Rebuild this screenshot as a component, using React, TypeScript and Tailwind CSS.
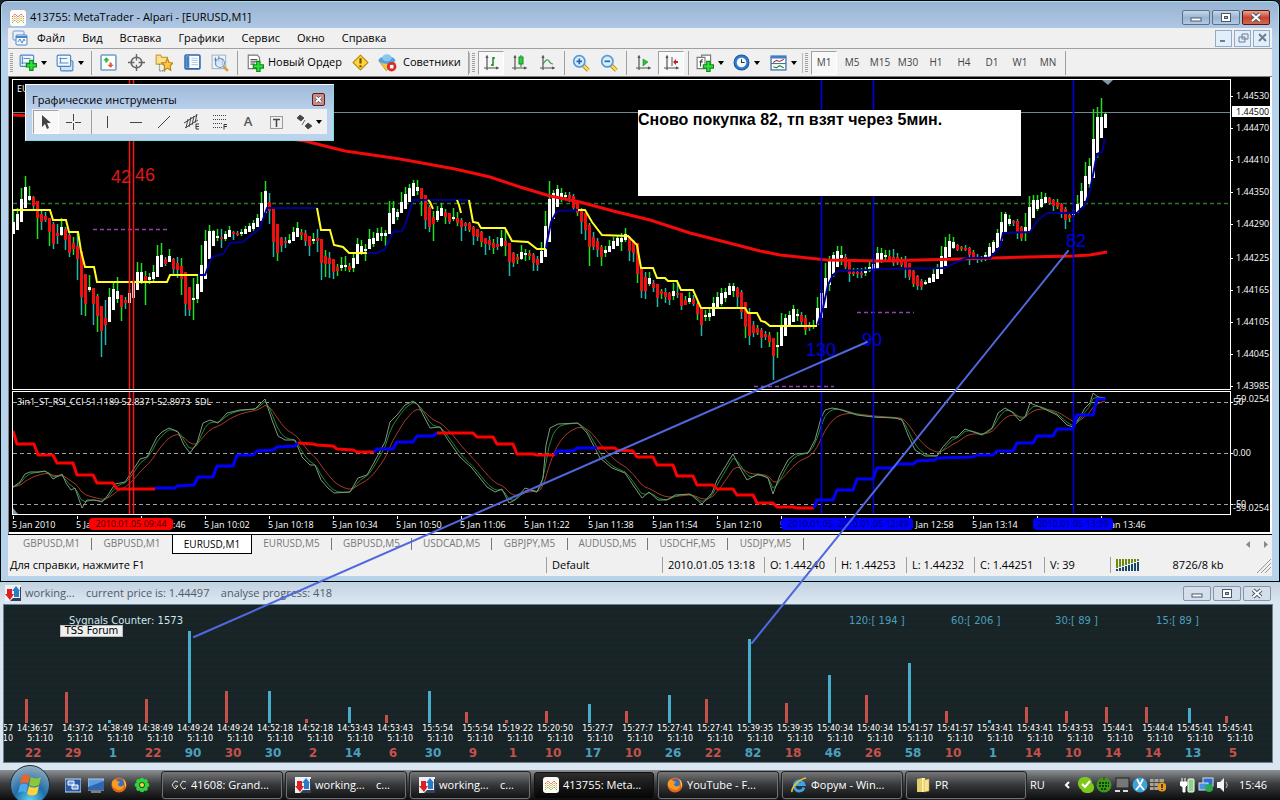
import React from "react";

type Point = [number, number];
// up, high, top, bottom, low
type Candle = [number, number, number, number, number];

const CANDLES: Candle[] = [
    [1, 210, 222, 234, 234], [1, 208, 214, 230, 230], [1, 188, 199, 222, 222], [1, 176, 187, 208, 208], [1, 186, 196, 200, 201],
    [0, 196, 197, 206, 210], [0, 201, 201, 218, 239], [0, 210, 214, 222, 230], [0, 212, 216, 220, 222], [0, 218, 218, 232, 246],
    [0, 222, 224, 244, 249], [0, 224, 233, 236, 244], [1, 218, 227, 235, 236], [0, 227, 229, 240, 250], [0, 232, 235, 253, 257],
    [0, 237, 243, 249, 255], [0, 233, 246, 259, 280], [0, 251, 251, 297, 315], [0, 274, 274, 304, 316], [1, 275, 287, 290, 292],
    [0, 288, 288, 304, 325], [0, 294, 296, 316, 332], [0, 306, 306, 331, 357], [0, 300, 318, 325, 345], [1, 288, 297, 322, 322],
    [1, 282, 289, 310, 310], [1, 277, 291, 299, 303], [0, 295, 295, 307, 321], [0, 297, 300, 303, 309], [1, 290, 293, 303, 303],
    [1, 280, 282, 298, 298], [1, 262, 272, 290, 290], [1, 263, 272, 281, 284], [0, 271, 276, 281, 305], [1, 273, 277, 280, 284],
    [1, 265, 272, 279, 281], [1, 245, 256, 277, 277], [1, 243, 255, 267, 267], [0, 257, 259, 264, 266], [1, 249, 256, 262, 262],
    [0, 258, 259, 269, 275], [0, 257, 263, 270, 278], [0, 258, 266, 279, 295], [0, 272, 272, 304, 316], [0, 287, 287, 310, 316],
    [1, 278, 298, 300, 320], [1, 276, 284, 299, 303], [1, 245, 265, 292, 292], [1, 230, 241, 279, 279], [1, 225, 231, 259, 259],
    [1, 230, 231, 246, 246], [1, 229, 236, 238, 241], [0, 229, 237, 239, 248], [1, 231, 234, 239, 241], [1, 226, 230, 237, 237],
    [0, 231, 232, 234, 240], [0, 231, 233, 235, 236], [1, 229, 232, 234, 236], [1, 226, 229, 234, 234], [1, 223, 226, 232, 232],
    [1, 220, 223, 229, 231], [1, 214, 218, 227, 227], [1, 192, 203, 221, 221], [1, 181, 191, 213, 213], [0, 193, 202, 211, 224],
    [0, 209, 209, 242, 257], [0, 224, 224, 253, 261], [0, 237, 238, 246, 252], [0, 237, 241, 243, 248], [1, 234, 240, 243, 244],
    [1, 227, 232, 241, 241], [1, 222, 228, 237, 237], [0, 229, 232, 235, 240], [0, 230, 233, 241, 246], [0, 236, 236, 246, 256],
    [1, 233, 239, 241, 244], [0, 229, 238, 241, 252], [0, 239, 239, 263, 280], [0, 250, 256, 264, 277], [0, 252, 258, 264, 278],
    [0, 259, 259, 272, 279], [0, 264, 267, 271, 276], [1, 257, 265, 268, 271], [1, 256, 265, 267, 271], [0, 263, 266, 270, 272],
    [1, 252, 258, 268, 272], [1, 238, 244, 264, 264], [1, 240, 246, 253, 255], [1, 244, 249, 251, 261], [1, 229, 239, 249, 249],
    [1, 232, 238, 244, 247], [1, 228, 233, 241, 241], [1, 227, 233, 236, 241], [1, 230, 233, 236, 246], [1, 201, 213, 234, 234],
    [1, 201, 208, 224, 224], [1, 209, 212, 217, 220], [1, 192, 202, 213, 213], [1, 187, 194, 209, 209], [1, 184, 188, 202, 202],
    [1, 180, 183, 196, 196], [1, 180, 187, 191, 195], [0, 188, 188, 201, 216], [0, 195, 195, 220, 229], [0, 205, 207, 227, 232],
    [0, 211, 217, 224, 241], [1, 206, 211, 220, 222], [1, 203, 208, 216, 216], [0, 209, 212, 217, 224], [0, 213, 213, 222, 224],
    [1, 208, 217, 219, 221], [0, 212, 218, 223, 226], [0, 218, 220, 227, 241], [0, 222, 223, 226, 231], [0, 222, 223, 230, 232],
    [0, 226, 227, 236, 245], [0, 229, 229, 237, 241], [0, 231, 232, 242, 247], [0, 238, 238, 244, 255], [0, 236, 240, 245, 250],
    [0, 239, 243, 248, 254], [0, 237, 244, 247, 250], [1, 230, 238, 246, 247], [0, 230, 241, 246, 256], [0, 243, 243, 262, 276],
    [0, 252, 253, 263, 267], [0, 254, 257, 260, 264], [1, 245, 252, 259, 260], [1, 249, 253, 255, 261], [0, 250, 253, 256, 260],
    [0, 253, 255, 263, 271], [0, 256, 259, 265, 271], [1, 242, 251, 263, 263], [1, 211, 226, 257, 257], [1, 181, 199, 242, 242],
    [1, 190, 193, 219, 219], [1, 185, 189, 207, 207], [1, 188, 193, 198, 202], [1, 192, 195, 197, 199], [0, 192, 195, 198, 202],
    [0, 194, 196, 208, 211], [0, 202, 202, 213, 216], [0, 208, 211, 222, 234], [0, 213, 213, 230, 240], [0, 223, 225, 247, 266],
    [0, 232, 237, 247, 250], [0, 238, 241, 250, 257], [0, 245, 247, 257, 266], [1, 246, 250, 253, 257], [1, 240, 246, 252, 252],
    [1, 237, 241, 249, 249], [1, 235, 238, 246, 246], [1, 233, 238, 242, 251], [1, 228, 234, 240, 242], [0, 236, 238, 251, 261],
    [0, 240, 242, 253, 262], [0, 243, 243, 274, 283], [0, 267, 267, 291, 298], [0, 272, 277, 291, 299], [1, 272, 278, 284, 286],
    [0, 280, 283, 288, 292], [0, 284, 284, 298, 307], [0, 289, 291, 294, 299], [0, 288, 292, 297, 303], [0, 292, 293, 300, 305],
    [1, 283, 291, 296, 300], [0, 283, 293, 295, 298], [0, 293, 293, 306, 310], [0, 296, 300, 305, 305], [1, 292, 298, 302, 304],
    [0, 295, 299, 304, 306], [0, 302, 304, 314, 320], [0, 309, 309, 325, 336], [1, 310, 315, 317, 321], [1, 309, 313, 317, 321],
    [1, 297, 303, 316, 316], [1, 292, 297, 309, 309], [1, 288, 293, 304, 306], [1, 288, 292, 298, 302], [1, 283, 286, 295, 295],
    [1, 283, 286, 291, 297], [0, 287, 288, 297, 309], [0, 290, 292, 312, 319], [0, 302, 302, 327, 338], [0, 308, 313, 336, 345],
    [0, 321, 325, 333, 337], [0, 325, 328, 333, 335], [0, 328, 330, 338, 348], [0, 331, 334, 337, 340], [0, 332, 335, 342, 347],
    [0, 338, 338, 356, 380], [1, 332, 345, 347, 358], [1, 313, 325, 346, 346], [1, 314, 318, 336, 336], [1, 311, 315, 327, 327],
    [1, 305, 309, 322, 322], [1, 309, 314, 316, 321], [0, 312, 315, 322, 325], [0, 315, 318, 330, 335], [0, 322, 325, 328, 331],
    [1, 320, 325, 327, 329], [1, 297, 308, 325, 325], [1, 290, 293, 318, 318], [1, 263, 278, 308, 308], [1, 256, 261, 285, 291],
    [1, 252, 255, 274, 277], [1, 246, 251, 267, 267], [1, 246, 255, 258, 265], [0, 254, 257, 267, 269], [0, 262, 262, 274, 282],
    [0, 268, 272, 274, 276], [0, 268, 272, 274, 278], [0, 268, 273, 275, 278], [1, 267, 271, 273, 276], [1, 262, 267, 271, 272],
    [1, 258, 264, 270, 271], [1, 247, 253, 270, 270], [1, 248, 253, 260, 263], [1, 250, 255, 257, 262], [0, 250, 256, 260, 262],
    [0, 249, 257, 263, 266], [0, 253, 257, 263, 265], [0, 257, 259, 265, 267], [0, 256, 260, 269, 278], [0, 263, 263, 277, 280],
    [0, 270, 271, 284, 287], [0, 275, 276, 286, 290], [0, 279, 281, 287, 290], [1, 280, 282, 284, 285], [1, 277, 278, 283, 283],
    [1, 268, 274, 282, 282], [1, 264, 269, 279, 279], [1, 246, 256, 274, 274], [1, 237, 247, 266, 266], [1, 234, 241, 257, 257],
    [1, 237, 242, 248, 249], [0, 244, 245, 250, 251], [0, 246, 247, 249, 251], [0, 245, 248, 250, 251], [0, 247, 248, 255, 265],
    [0, 250, 252, 257, 260], [0, 254, 257, 259, 263], [0, 256, 257, 259, 262], [1, 252, 255, 258, 261], [1, 243, 247, 258, 258],
    [1, 240, 242, 253, 253], [1, 229, 233, 248, 248], [1, 212, 222, 241, 241], [1, 212, 214, 232, 232], [1, 215, 219, 224, 226],
    [0, 220, 221, 223, 226], [0, 219, 221, 233, 239], [0, 226, 227, 238, 241], [1, 213, 227, 232, 241], [1, 196, 207, 231, 231],
    [1, 195, 200, 218, 218], [1, 195, 200, 209, 211], [1, 192, 199, 207, 208], [1, 193, 197, 203, 203], [0, 197, 198, 203, 205],
    [0, 199, 200, 206, 211], [0, 199, 202, 207, 209], [0, 203, 204, 212, 218], [0, 207, 209, 220, 229], [0, 213, 215, 218, 222],
    [1, 210, 212, 215, 217], [1, 195, 204, 213, 213], [1, 183, 191, 208, 208], [1, 162, 176, 201, 201], [1, 158, 166, 184, 188],
    [1, 109, 139, 178, 178], [1, 107, 117, 153, 158], [1, 98, 117, 138, 138], [1, 112, 114, 128, 128],
];

const SLOW_MA: Point[] = [
    [13, 115], [60, 117], [120, 120], [200, 127], [305, 141], [345, 151], [400, 159], [455, 169], [490, 177], [520, 187], [550, 196],
    [580, 202], [613, 211], [650, 220], [690, 233], [733, 244], [760, 251], [780, 255], [827, 260], [880, 261], [960, 259],
    [1027, 257], [1073, 256], [1090, 255], [1107, 252],
];

const YELLOW: Point[][] = [
    [[13, 210], [50, 210], [53, 220], [66, 220], [69, 232], [78, 232], [81, 251], [85, 267], [94, 267], [97, 282], [167, 282], [170, 275], [198, 275]],
    [[317, 208], [321, 230], [330, 230], [334, 245], [343, 247], [349, 253], [367, 253]],
    [[428, 200], [430, 202], [433, 209]],
    [[457, 200], [459, 205], [461, 213]],
    [[469, 200], [473, 222], [478, 223], [481, 228], [505, 228], [512, 241], [528, 242], [537, 249], [546, 249]],
    [
        [578, 210], [585, 210], [592, 222], [602, 235], [628, 236], [637, 245], [641, 268], [653, 268], [657, 278], [665, 278],
        [668, 281], [677, 281], [681, 290], [693, 290], [701, 308], [745, 308], [748, 313], [757, 313], [761, 321], [765, 322],
        [770, 326], [817, 326],
    ],
];

const NAVY: Point[][] = [
    [[198, 275], [205, 275], [212, 257], [223, 254], [230, 243], [243, 242], [260, 228], [267, 208], [317, 208]],
    [[367, 253], [377, 253], [385, 249], [393, 232], [402, 231], [405, 225], [413, 200], [469, 200]],
    [[546, 249], [547, 242], [551, 222], [557, 211], [578, 210]],
    [
        [817, 326], [823, 308], [828, 285], [833, 275], [838, 271], [867, 270], [880, 269], [945, 268], [957, 262], [967, 258],
        [990, 258], [1000, 247], [1003, 233], [1030, 232], [1038, 220], [1047, 213], [1077, 213], [1085, 205], [1090, 190],
        [1093, 175], [1097, 154], [1102, 152], [1105, 139],
    ],
];

const FAST: Point[] = [
    [13, 487], [20, 482], [25, 474], [30, 472], [38, 472], [45, 471], [49, 474], [53, 479], [62, 474], [66, 483], [71, 490], [75, 488],
    [82, 508], [87, 500], [95, 500], [102, 502], [108, 495], [115, 484], [125, 482], [133, 470], [140, 459], [147, 457], [157, 437],
    [162, 432], [169, 428], [178, 432], [184, 445], [190, 453], [197, 443], [203, 423], [210, 420], [218, 423], [227, 413], [240, 410],
    [255, 409], [265, 399], [272, 420], [278, 436], [285, 440], [295, 440], [302, 457], [310, 465], [315, 465], [321, 480], [328, 488],
    [334, 493], [350, 492], [358, 478], [367, 475], [377, 457], [385, 442], [390, 422], [397, 415], [405, 405], [413, 401], [418, 405],
    [430, 428], [440, 427], [448, 440], [460, 457], [472, 468], [487, 487], [495, 492], [502, 489], [509, 503], [515, 500], [525, 488],
    [537, 492], [543, 478], [546, 445], [550, 428], [558, 424], [578, 423], [587, 433], [600, 458], [612, 468], [625, 473], [633, 485],
    [642, 498], [649, 492], [658, 500], [667, 500], [675, 495], [690, 494], [702, 504], [712, 493], [717, 480], [733, 454], [740, 468],
    [747, 480], [758, 474], [768, 478], [773, 494], [780, 475], [788, 460], [795, 454], [808, 453], [815, 440], [821, 418], [825, 410],
    [832, 408], [838, 409], [857, 415], [873, 417], [895, 418], [902, 420], [908, 435], [915, 450], [925, 456], [937, 456], [942, 448],
    [952, 437], [957, 437], [965, 429], [982, 435], [992, 428], [998, 413], [1005, 408], [1012, 412], [1020, 421], [1025, 417],
    [1030, 403], [1040, 407], [1057, 415], [1067, 425], [1073, 427], [1080, 417], [1085, 408], [1090, 403], [1093, 393], [1098, 397],
    [1105, 398],
];

const STEPS: { color: string; points: Point[] }[] = [
    { color: "#ff0000", points: [[13, 431], [17, 444], [34, 444], [38, 455], [53, 455], [57, 463], [73, 463], [77, 475], [93, 475], [97, 483], [113, 483], [117, 489], [155, 489]] },
    { color: "#0000ff", points: [[155, 488], [175, 488], [177, 486], [194, 485], [198, 477], [213, 477], [217, 466], [233, 466], [237, 455], [253, 455], [257, 451], [273, 450], [277, 447], [295, 446], [298, 443]] },
    { color: "#ff0000", points: [[298, 443], [313, 444], [317, 445], [333, 446], [337, 449], [353, 450], [357, 452], [374, 452]] },
    { color: "#0000ff", points: [[374, 452], [377, 449], [393, 449], [397, 442], [413, 442], [417, 436], [433, 436], [437, 433]] },
    { color: "#ff0000", points: [[437, 433], [473, 433], [477, 437], [493, 437], [497, 444], [513, 444], [517, 454], [533, 454], [537, 455], [555, 455]] },
    { color: "#0000ff", points: [[555, 455], [557, 451], [573, 451], [577, 448], [597, 448]] },
    { color: "#ff0000", points: [[597, 448], [615, 448], [617, 450], [633, 451], [637, 457], [653, 457], [657, 465], [673, 465], [677, 476], [693, 476], [697, 485], [713, 485], [717, 489], [733, 489], [737, 495], [753, 495], [757, 503], [773, 503], [777, 507], [793, 507], [797, 508], [814, 508]] },
    { color: "#0000ff", points: [[814, 508], [817, 500], [833, 500], [837, 490], [853, 490], [857, 479], [873, 479], [877, 468], [893, 468], [897, 464], [913, 464], [917, 461], [935, 460], [937, 458], [973, 457], [977, 455], [993, 455], [997, 451], [1013, 451], [1017, 443], [1033, 443], [1037, 436], [1053, 436], [1057, 429], [1073, 429], [1077, 415], [1093, 415], [1097, 399], [1106, 399]] },
];

const PRICES: [string, number][] = [
    ["1.44530", 96], ["1.44470", 128], ["1.44410", 160], ["1.44350", 192], ["1.44290", 224], ["1.44225", 258],
    ["1.44165", 290], ["1.44105", 322], ["1.44045", 354], ["1.43985", 386],
];

const TIMES = [
    "5 Jan 2010", "5 Jan 09:30", "5 Jan 09:46", "5 Jan 10:02", "5 Jan 10:18", "5 Jan 10:34", "5 Jan 10:50", "5 Jan 11:06", "5 Jan 11:22",
    "5 Jan 11:38", "5 Jan 11:54", "5 Jan 12:10", "5 Jan 12:26", "5 Jan 12:42", "5 Jan 12:58", "5 Jan 13:14", "5 Jan 13:30", "5 Jan 13:46",
];

// time, count, direction
const SIGNALS: [string, number, "up" | "down"][] = [
    ["14:36:57", 22, "down"], ["14:37:2", 29, "down"], ["14:38:49", 1, "up"], ["14:38:49", 22, "down"], ["14:49:24", 90, "up"],
    ["14:49:24", 30, "down"], ["14:52:18", 30, "up"], ["14:52:18", 2, "down"], ["14:53:43", 14, "up"], ["14:53:43", 6, "down"],
    ["15:5:54", 30, "up"], ["15:5:54", 9, "down"], ["15:19:22", 1, "down"], ["15:20:50", 10, "down"], ["15:27:7", 17, "up"],
    ["15:27:7", 10, "down"], ["15:27:41", 26, "up"], ["15:27:41", 22, "down"], ["15:39:35", 82, "up"], ["15:39:35", 18, "down"],
    ["15:40:34", 46, "up"], ["15:40:34", 26, "down"], ["15:41:57", 58, "up"], ["15:41:57", 10, "down"], ["15:43:41", 1, "up"],
    ["15:43:41", 14, "down"], ["15:43:53", 10, "down"], ["15:44:1", 14, "down"], ["15:44:4", 14, "down"], ["15:45:41", 13, "up"],
    ["15:45:41", 5, "down"],
];

const MENU = ["Файл", "Вид", "Вставка", "Графики", "Сервис", "Окно", "Справка"];
const PERIODS = ["M1", "M5", "M15", "M30", "H1", "H4", "D1", "W1", "MN"];
const TABS = ["GBPUSD,M1", "GBPUSD,M1", "EURUSD,M1", "EURUSD,M5", "GBPUSD,M5", "USDCAD,M5", "GBPJPY,M5", "AUDUSD,M5", "USDCHF,M5", "USDJPY,M5"];

const toPath = (points: Point[]) => points.map((p) => p.join(",")).join(" ");

// Sample the line once per bar, then smooth it exponentially.
const smooth = (points: Point[], alpha: number): Point[] => {
    const result: Point[] = [];
    let value = points[0][1];
    let i = 0;
    for (let x = 13; x <= 1105; x += 4) {
        while (i < points.length - 2 && points[i + 1][0] < x) i++;
        const [x0, y0] = points[i];
        const [x1, y1] = points[i + 1];
        const y = y0 + ((y1 - y0) * (x - x0)) / (x1 - x0);
        value += alpha * (y - value);
        result.push([x, Math.round(value * 10) / 10]);
    }
    return result;
};

/* ---------- icons ---------- */

const Svg = ({ size = 16, children }: { size?: number; children: React.ReactNode }) => (
    <svg width={size} height={size} viewBox="0 0 16 16" className="shrink-0" fill="none" aria-hidden="true">
        {children}
    </svg>
);

const PlusMark = ({ x, y }: { x: number; y: number }) => (
    <path d={`M${x} ${y - 5}v10M${x - 5} ${y}h10`} stroke="#0a8a14" strokeWidth="4" />
);

const PlusFill = ({ x, y }: { x: number; y: number }) => (
    <path d={`M${x} ${y - 4}v8M${x - 4} ${y}h8`} stroke="#2fe03c" strokeWidth="2" />
);

const Logo = () => (
    <Svg>
        <rect width="16" height="16" rx="3" fill="#fdfdf6" />
        <path d="M2 7l3-3 3 3 3-3 3 3" stroke="#d9534a" strokeDasharray="2 1" />
        <path d="M2 9l3-3 3 3 3-3 3 3" stroke="#e39a43" strokeDasharray="2 1" />
        <path d="M2 11l3-3 3 3 3-3 3 3" stroke="#c9b25a" strokeDasharray="2 1" />
        <path d="M2 13l3-3 3 3 3-3 3 3" stroke="#7fae4a" strokeDasharray="2 1" />
    </Svg>
);

const ChartsIcon = () => (
    <Svg>
        <rect x="1" y="1" width="11" height="9" rx="1" fill="#e8f2fc" stroke="#6b9bd0" />
        <rect x="4" y="5" width="11" height="10" rx="1" fill="#f4faff" stroke="#4a86c8" />
        <path d="M4 7h11" stroke="#4a86c8" strokeWidth="2" />
        <path d="M6 12l2-3 2 4 2-4 1 2" stroke="#4a86c8" />
    </Svg>
);

const NewChartIcon = () => (
    <Svg size={18}>
        <rect x="1" y="1" width="12" height="10" rx="1" fill="#eef6ff" stroke="#4a84c4" />
        <path d="M3 2v7M2 8h9M4 4h6" stroke="#5b8dc4" />
        <PlusMark x={11} y={10} />
        <PlusFill x={11} y={10} />
    </Svg>
);

const ProfilesIcon = () => (
    <Svg size={18}>
        <rect x="4" y="6" width="11" height="9" rx="1" fill="#cfe2f6" stroke="#4a84c4" />
        <rect x="1" y="1" width="12" height="10" rx="1" fill="#f4f9ff" stroke="#4a84c4" />
        <path d="M4 3v5M3 8h8M3 4h7" stroke="#5b8dc4" />
    </Svg>
);

const MarketIcon = () => (
    <Svg size={17}>
        <rect x="1" y="1" width="14" height="14" rx="1" fill="#fff" stroke="#6f9dd0" strokeWidth="1.5" />
        <path d="M6 3l3 3H7v2H5V6H3z" fill="#28b43a" />
        <path d="M10 13l3-3h-2V8H9v2H7z" fill="#e2552b" />
    </Svg>
);

const CrosshairIcon = () => (
    <Svg size={17}>
        <circle cx="8" cy="8" r="5" stroke="#666" strokeWidth="1.5" />
        <path d="M8 0v6M8 10v6M0 8h6M10 8h6" stroke="#666" strokeWidth="1.3" />
    </Svg>
);

const NavigatorIcon = () => (
    <Svg size={18}>
        <path d="M1 1h4l1 2h5v6H1z" fill="#fce08a" stroke="#c9a034" />
        <path d="M4 9v6h5" stroke="#555" strokeDasharray="1 1" />
        <path d="M11 4l1.500 3.500 3.500.5-2.500 2.500.5 4-3-2-3 2 .5-4L6 8l3.500-.5z" fill="#ffc93c" stroke="#b98012" />
    </Svg>
);

const TerminalIcon = () => (
    <Svg size={17}>
        <rect x="1" y="1" width="14" height="13" rx="1" fill="#fff" stroke="#2c66ac" strokeWidth="1.5" />
        <rect x="2" y="2" width="3" height="11" fill="#3e7fcb" />
        <path d="M7 4h6M7 6h6M7 8h6M7 10h6" stroke="#b9cde4" />
    </Svg>
);

const TesterIcon = () => (
    <Svg size={18}>
        <rect x="1" y="1" width="12" height="12" fill="#eef3f8" stroke="#a8b8c8" />
        <path d="M4 3v7M7 2v5M10 4v6M3 5h2M9 5h2" stroke="#5e7fa2" />
        <circle cx="8" cy="8" r="4" fill="#cfe6fa" fillOpacity=".7" stroke="#6f99c4" />
        <path d="M11 11l4 4" stroke="#d2a33c" strokeWidth="2.500" />
    </Svg>
);

const OrderIcon = () => (
    <Svg size={18}>
        <path d="M2 1h8l2 2v10H2z" fill="#fff" stroke="#777" />
        <path d="M4 5h6M4 7h6M4 9h4" stroke="#555" />
        <PlusMark x={11} y={11} />
        <PlusFill x={11} y={11} />
    </Svg>
);

const WarningIcon = () => (
    <Svg size={17}>
        <path d="M8 1l7 7-7 7-7-7z" fill="#ffd63a" stroke="#b78b12" strokeLinejoin="round" />
        <path d="M8 4v5M8 10.500v2" stroke="#6b4d00" strokeWidth="2" />
    </Svg>
);

const ExpertIcon = () => (
    <Svg size={19}>
        <path d="M1 7l6 8 7-7z" fill="#f4c542" stroke="#b98a1c" strokeWidth=".6" />
        <ellipse cx="7.500" cy="6" rx="7" ry="3" fill="#4fa3e0" />
        <ellipse cx="7.500" cy="4" rx="4" ry="3" fill="#86c8f2" />
        <circle cx="11.500" cy="11.500" r="4" fill="#d92b2b" />
        <rect x="10" y="10" width="3" height="3" fill="#fff" />
    </Svg>
);

const Axes = () => <path d="M4 2v13M1 13h14M3 3l1-2 1 2M13 12l2 1-2 1" stroke="#555" strokeWidth="1.200" />;

const BarChartIcon = () => (
    <Svg>
        <Axes />
        <path d="M10 2v9M10 3h2M8 10h2" stroke="#168a22" strokeWidth="1.500" />
    </Svg>
);

const CandleIcon = () => (
    <Svg>
        <Axes />
        <path d="M10 0v12" stroke="#168a22" />
        <rect x="8" y="2" width="4" height="7" fill="#2fd03c" stroke="#168a22" />
    </Svg>
);

const LineIcon = () => (
    <Svg>
        <Axes />
        <path d="M4 9c3-5 5-5 6-3s2 3 4 3" stroke="#3c9a46" strokeWidth="1.200" />
    </Svg>
);

const ZoomIcon = ({ plus }: { plus?: boolean }) => (
    <Svg size={18}>
        <path d="M10 10l4.500 4.500" stroke="#b98a1c" strokeWidth="3.500" />
        <path d="M10 10l4.500 4.500" stroke="#ffe05a" strokeWidth="2" />
        <circle cx="6.500" cy="6.500" r="5" fill="#d9eefc" stroke="#5a9ad6" strokeWidth="1.500" />
        <path d={plus ? "M4 6.500h5M6.500 4v5" : "M4 6.500h5"} stroke="#2366b8" strokeWidth="1.500" />
    </Svg>
);

const ScrollIcon = () => (
    <Svg>
        <Axes />
        <path d="M8 4l5 3-5 4z" fill="#2fbf3c" stroke="#168a22" strokeWidth=".6" />
    </Svg>
);

const ShiftIcon = () => (
    <Svg>
        <Axes />
        <path d="M9 2v9" stroke="#555" />
        <path d="M10 7l3-3v2h2v2h-2v2z" fill="#c02525" />
    </Svg>
);

const IndicatorIcon = () => (
    <Svg size={18}>
        <path d="M5 1h8v10H5z" fill="#fff" stroke="#777" />
        <path d="M1 3h7v10H1z" fill="#fff" stroke="#777" />
        <path d="M6 5c-2 0-2 1-2 6M3 7h3" stroke="#444" />
        <PlusMark x={11} y={11} />
        <PlusFill x={11} y={11} />
    </Svg>
);

const ClockIcon = () => (
    <Svg size={17}>
        <circle cx="8" cy="8" r="7" fill="#2f7ed0" stroke="#1a5297" />
        <circle cx="8" cy="8" r="4.500" fill="#f4faff" />
        <path d="M8 5v3h3" stroke="#333" />
    </Svg>
);

const TemplateIcon = () => (
    <Svg size={17}>
        <rect x="1" y="2" width="14" height="13" fill="#fff" stroke="#3e6fa8" strokeWidth="1.200" />
        <path d="M1 3h14" stroke="#3e7fcb" strokeWidth="2.500" />
        <path d="M3 8l3-2 3 1 4-2" stroke="#b13a3a" />
        <path d="M1 9h14" stroke="#3e6fa8" />
        <path d="M3 12l3 1 3-2 4 2" stroke="#2c8a3a" />
    </Svg>
);

const SignalLogo = ({ size = 16 }: { size?: number }) => (
    <Svg size={size}>
        <rect width="16" height="16" fill="#eef2f6" />
        <path d="M0 9h2V4h5v5h2l-4 6z" fill="#d92222" />
        <path d="M11 1l4 5h-1v6H9V6H7z" fill="#2a7cc8" />
        <path d="M8 13h8v3H5z" fill="#3a3f58" />
        <path d="M15 2h1v14h-1z" fill="#3a3f58" />
    </Svg>
);

const FirefoxIcon = () => (
    <Svg>
        <circle cx="8" cy="8" r="7.500" fill="#e2661a" />
        <circle cx="8.500" cy="6.500" r="4.500" fill="#3a6fc4" />
        <path d="M1 5c2-3 4-3 5-1l3 1-2 2c0 3 4 3 6 1 0 5-5 6-8 4S0 9 1 5z" fill="#f59a22" />
        <path d="M12 2c3 2 4 6 2 9 0-3 0-5-2-9z" fill="#ffc93c" />
    </Svg>
);

const ExplorerIcon = () => (
    <Svg>
        <path d="M13 10.500A5 5 0 1 1 13 7.500H5" stroke="#3ba4ea" strokeWidth="2.800" />
        <path d="M1 15C0 11 8 2 15 1" stroke="#f4c22c" strokeWidth="1.600" />
    </Svg>
);

const FolderIcon = () => (
    <Svg>
        <path d="M2 2l5-1v14H2z" fill="#e6cf6a" />
        <path d="M7 1h3v14H7z" fill="#fbf2b4" />
        <path d="M9 3l5-1v12l-5 1z" fill="#f4e28c" stroke="#c5a440" strokeWidth=".5" />
    </Svg>
);

const GcIcon = () => (
    <Svg>
        <path d="M7 5L4 4 1 8l3 4 3-3H4M15 5l-3-1-3 4 3 4 3-1" stroke="#ddd" />
    </Svg>
);

/* ---------- shared pieces ---------- */

const Separator = () => (
    <span className="flex h-6 w-[6px] shrink-0 justify-center">
        <span className="w-px bg-[#a0a0a0]" />
    </span>
);

const Grip = () => (
    <span className="flex w-[8px] shrink-0 justify-center border-l border-[#b8b8b8]">
        <span className="h-5 w-[3px] bg-[repeating-linear-gradient(#a0a0a0_0_1px,#f0f0f0_1px_2px)]" />
    </span>
);

const Caret = () => (
    <svg width="6" height="4" viewBox="0 0 6 4" className="shrink-0" aria-hidden="true">
        <path d="M0 0h6L3 4z" fill="#000" />
    </svg>
);

interface ToolProps {
    label: string;
    pressed?: boolean;
    children: React.ReactNode;
}

const Tool = ({ label, pressed, children }: ToolProps) => (
    <button type="button" aria-label={label} className="flex h-6 w-7 shrink-0 items-center justify-center">
        <span
            className={
                pressed
                    ? "flex h-6 w-[26px] items-center justify-center border border-[#a0a0a0] border-r-white border-b-white bg-[#f8f8f8]"
                    : "flex"
            }
        >
            {children}
        </span>
    </button>
);

const DropTool = ({ label, children }: ToolProps) => (
    <button type="button" aria-label={label} className="flex h-6 w-[37px] shrink-0 items-center justify-center gap-1">
        {children}
        <Caret />
    </button>
);

const WINDOW_LABELS = ["Minimize", "Maximize", "Close"];
const WINDOW_GLYPHS = [
    <rect key="min" x="8" y="7" width="10" height="3" fill="#fff" stroke="#4c5868" />,
    <g key="max" stroke="#4c5868">
        <rect x="8.500" y="2.500" width="9" height="8" fill="#fff" />
        <rect x="11.500" y="5.500" width="3" height="2" fill="#9ab4d2" />
    </g>,
    <g key="close">
        <path d="M9 3l8 7M17 3l-8 7" stroke="#4c5868" strokeWidth="4" />
        <path d="M9 3l8 7M17 3l-8 7" stroke="#fff" strokeWidth="2" />
    </g>,
];

const WindowButtons = ({ active }: { active?: boolean }) => (
    <div className="flex gap-[2px]">
        {WINDOW_GLYPHS.map((glyph, i) => (
            <button
                key={i}
                type="button"
                aria-label={WINDOW_LABELS[i]}
                className={
                    !active
                        ? "h-[15px] w-7 rounded-[2px] border border-[#8694a4] bg-[#d3e0ec]"
                        : i === 2
                          ? "h-[15px] w-7 rounded-[2px] border border-[#5a1410] bg-linear-to-b from-[#e2a397] via-[#c9432c] to-[#d0674f]"
                          : "h-[15px] w-7 rounded-[2px] border border-[#5b7189] bg-linear-to-b from-[#c6d8ec] via-[#9ab4d2] to-[#b4cbe6]"
                }
            >
                <svg width="26" height="13" viewBox="0 0 26 13" fill="none" aria-hidden="true">
                    {glyph}
                </svg>
            </button>
        ))}
    </div>
);

/* ---------- chart ---------- */

const PriceChart = () => (
    <svg width="100%" height="100%" className="block" aria-label="EURUSD M1">
        <g transform="translate(-13 -80)" fill="none">
            <path d="M13 112.500H1230" stroke="#708890" />
            <path d="M13 203.500H1230" stroke="#2a7a2a" strokeWidth="1.5" strokeDasharray="4 3" />
            <path d="M93 229.500h75M857 312.500h57M754 386.500h80" stroke="#9040b0" strokeWidth="1.5" strokeDasharray="4 3" />
            <path d="M1102 80h11l-5 5z" fill="#8096a0" />
            {CANDLES.map(([up, high, top, bottom, low], i) => (
                <g key={i}>
                    <rect x={12.75 + i * 4} y={high} width="1.5" height={low - high} fill={up || i % 3 === 0 ? "#22dd22" : "#20b8ac"} />
                    <rect x={12 + i * 4} y={top} width="3" height={bottom - top} fill={up ? "#ffffff" : "#f01010"} />
                </g>
            ))}
            <polyline points={toPath(SLOW_MA)} stroke="#f40a0a" strokeWidth="3" strokeLinejoin="round" />
            {NAVY.map((line) => (
                <polyline key={line[0][0]} points={toPath(line)} stroke="#000090" strokeWidth="2" />
            ))}
            {YELLOW.map((line) => (
                <polyline key={line[0][0]} points={toPath(line)} stroke="#ffff22" strokeWidth="2" />
            ))}
            <path d="M129.500 80V389M133.500 80V389" stroke="#f01818" strokeWidth="1.6" />
            <path d="M821.500 80V389M873.500 80V389M1073.500 80V389" stroke="#0000e0" strokeWidth="1.6" />
            <g className="font-['Liberation_Sans',Arial,sans-serif] text-[18px]">
                <text x="111" y="183" fill="#e01818">42</text>
                <text x="135" y="181" fill="#e01818">46</text>
                <text x="806" y="356" fill="#0000e0">130</text>
                <text x="862" y="346" fill="#0000e0">90</text>
                <text x="1066" y="247" fill="#0000e0">82</text>
            </g>
            <text x="17" y="92" fill="#fff" className="text-[9px]">EURUSD,M1</text>
        </g>
    </svg>
);

const IndicatorChart = () => (
    <svg width="100%" height="100%" className="block" aria-label="3in1 ST RSI CCI">
        <g transform="translate(-13 -392)" fill="none">
            <path d="M13 402.500H1230M13 453.500H1230M13 504.500H1230" stroke="#a0a0a0" strokeDasharray="4 3" />
            <polyline points={toPath(smooth(FAST, 0.28))} stroke="#a33a2c" />
            <polyline points={toPath(smooth(FAST, 0.6))} stroke="#1f8a30" />
            <polyline points={toPath(FAST)} stroke="#809880" />
            {STEPS.map((step) => (
                <polyline key={step.points[0][0]} points={toPath(step.points)} stroke={step.color} strokeWidth="3" strokeLinejoin="round" />
            ))}
            <path d="M129.500 392V514M133.500 392V514" stroke="#f01818" strokeWidth="1.6" />
            <path d="M821.500 392V514M873.500 392V514M1073.500 392V514" stroke="#0000e0" strokeWidth="1.6" />
            <path d="M13 508l5 6h-5z" fill="#8096a0" />
            <text x="17" y="405" fill="#fff" className="text-[9px] whitespace-pre">3in1_ST_RSI_CCI 51.1189 52.8371 52.8973  SDL</text>
        </g>
    </svg>
);

const ChartWindow = () => (
    <div className="border-t border-l border-[#808080] bg-black">
        <div className="grid grid-cols-[1fr_39px] gap-y-px border-r-2 border-b-2 border-white pt-[2px] pl-[3px] text-[9px] text-white">
            <div className="h-[311px] overflow-hidden border border-white">
                <PriceChart />
            </div>
            <svg width="39" height="311" className="text-[9px]" aria-label="Price scale">
                <g transform="translate(-1231 -79)" fill="#fff">
                    {PRICES.map(([label, y]) => (
                        <g key={label}>
                            <rect x="1231" y={y} width="2" height="1" />
                            <text x="1236" y={y + 3}>{label}</text>
                        </g>
                    ))}
                    <rect x="1232" y="106" width="38" height="11" />
                    <text x="1236" y="115" fill="#000">1.44500</text>
                </g>
            </svg>
            <div className="h-[124px] overflow-hidden border border-white">
                <IndicatorChart />
            </div>
            <svg width="39" height="124" className="text-[9px]" aria-label="Indicator scale">
                <g transform="translate(-1231 -391)" fill="#fff">
                    <path d="M1231 402h2v1h-2zM1231 453h2v1h-2zM1231 504h2v1h-2z" />
                    <text x="1236" y="402">59.0254</text>
                    <text x="1233" y="405">50</text>
                    <text x="1233" y="456">0.00</text>
                    <text x="1233" y="507">-50</text>
                    <text x="1233" y="511">-59.0254</text>
                </g>
            </svg>
            <div className="relative col-span-2 flex h-[16px] overflow-hidden">
                {TIMES.map((time) => (
                    <span key={time} className="relative h-4 w-16 shrink-0 leading-[17px] whitespace-nowrap">
                        <span className="absolute top-0 left-px h-[3px] w-px bg-white" />
                        {time}
                    </span>
                ))}
                <span className="absolute top-[2px] left-[77px] h-[12px] w-21 rounded-sm bg-[#ff0000] text-center leading-[12px] text-[#400000]">2010.01.05 09:44</span>
                <span className="absolute top-[2px] left-[769px] h-[12px] w-21 rounded-sm bg-[#0000ff] text-center leading-[12px] text-[#000060]">2010.01.05 12:36</span>
                <span className="absolute top-[2px] left-[821px] h-[12px] w-20 rounded-sm bg-[#0000ff] text-center leading-[12px] text-[#000060]">2010.01.05 12:49</span>
                <span className="absolute top-[2px] left-[1021px] h-[12px] w-20 rounded-sm bg-[#0000ff] text-center leading-[12px] text-[#000060]">2010.01.05 13:39</span>
            </div>
        </div>
    </div>
);

const DrawingTools = () => (
    <div className="absolute top-[83px] left-[24px] w-[309px] border border-[#7adfe0] border-t-white border-l-white bg-linear-to-b from-[#9fb9d8] to-[#bcd3ee] to-50% px-[6px] pb-[6px]">
        <div className="flex h-6 items-center justify-between pt-[5px] pr-[2px]">
            <span className="text-[11px] leading-[16px]">Графические инструменты</span>
            <button type="button" aria-label="Close" className="flex h-[13px] w-[13px] items-center justify-center rounded-[2px] border border-[#5a1f1c] bg-[#c98a86]">
                <svg width="9" height="9" viewBox="0 0 9 9" aria-hidden="true">
                    <path d="M2 2l5 5M7 2L2 7" stroke="#333" strokeWidth="3" />
                    <path d="M2 2l5 5M7 2L2 7" stroke="#fff" strokeWidth="2" />
                </svg>
            </button>
        </div>
        <div className="flex h-[25px] items-center bg-[#f0f0f0]">
            <Tool label="Cursor" pressed>
                <Svg><path d="M4 1v12l3-3 2 5 2-1-2-5h4z" fill="#444" /></Svg>
            </Tool>
            <Tool label="Crosshair">
                <Svg><path d="M7.500 0v7M7.500 9v7M0 8.500h6M9 8.500h6" stroke="#444" /></Svg>
            </Tool>
            <Separator />
            <Tool label="Vertical line">
                <Svg><path d="M7.500 2v12" stroke="#444" /></Svg>
            </Tool>
            <Tool label="Horizontal line">
                <Svg><path d="M2 8.500h12" stroke="#444" /></Svg>
            </Tool>
            <Tool label="Trend line">
                <Svg><path d="M2 14L14 2" stroke="#444" /></Svg>
            </Tool>
            <Tool label="Equidistant channel">
                <Svg>
                    <path d="M0 9L13 1M1 14L14 6M4 5L2 14M7 3L5 13M10 2L8 11M13 0l-2 9" stroke="#444" />
                    <path d="M15 10h-3v5h3M12 12.500h3" stroke="#333" />
                </Svg>
            </Tool>
            <Tool label="Fibonacci">
                <Svg>
                    <path d="M1 1.500h14M1 5.500h14M1 9.500h10M1 13.500h9" stroke="#444" strokeDasharray="1 1" />
                    <path d="M15 10.500h-3v5M12 12.500h3" stroke="#333" />
                </Svg>
            </Tool>
            <Tool label="Text">
                <span className="text-[13px] font-semibold text-[#555]">A</span>
            </Tool>
            <Tool label="Text label">
                <Svg>
                    <rect x="2.500" y="2.500" width="12" height="12" stroke="#444" strokeDasharray="1 1" />
                    <path d="M5 5.500h7M8.500 5v8" stroke="#444" strokeWidth="1.500" />
                </Svg>
            </Tool>
            <DropTool label="Arrows">
                <Svg><path d="M1 4l3-3 4 3-3 3zM9 12l3-3 4 3-4 3zM6 11l3-5" fill="#444" stroke="#444" strokeWidth=".8" /></Svg>
            </DropTool>
        </div>
    </div>
);

const Toolbar = () => (
    <div className="flex h-[27px] items-center bg-[#f0f0f0] text-[11px]">
        <span className="flex w-[6px] shrink-0 justify-center">
            <span className="h-5 w-[3px] bg-[repeating-linear-gradient(#a0a0a0_0_1px,#f0f0f0_1px_2px)]" />
        </span>
        <DropTool label="New chart"><NewChartIcon /></DropTool>
        <DropTool label="Profiles"><ProfilesIcon /></DropTool>
        <Separator />
        <Tool label="Market watch"><MarketIcon /></Tool>
        <Tool label="Data window"><CrosshairIcon /></Tool>
        <Tool label="Navigator"><NavigatorIcon /></Tool>
        <Tool label="Terminal"><TerminalIcon /></Tool>
        <Tool label="Tester"><TesterIcon /></Tool>
        <Separator />
        <button type="button" className="flex h-6 w-[106px] shrink-0 items-center gap-1 pl-[6px] whitespace-nowrap">
            <OrderIcon />
            Новый Ордер
        </button>
        <Tool label="Options"><WarningIcon /></Tool>
        <button type="button" className="flex h-6 w-[90px] shrink-0 items-center gap-[6px] pl-[4px] whitespace-nowrap">
            <ExpertIcon />
            Советники
        </button>
        <span className="h-6 w-[5px] shrink-0 border-r border-[#a0a0a0]" />
        <Grip />
        <Tool label="Bar chart" pressed><BarChartIcon /></Tool>
        <Tool label="Candlesticks"><CandleIcon /></Tool>
        <Tool label="Line chart"><LineIcon /></Tool>
        <Separator />
        <Tool label="Zoom in"><ZoomIcon plus /></Tool>
        <Tool label="Zoom out"><ZoomIcon /></Tool>
        <Separator />
        <Tool label="Auto scroll"><ScrollIcon /></Tool>
        <Tool label="Chart shift" pressed><ShiftIcon /></Tool>
        <Separator />
        <DropTool label="Indicators"><IndicatorIcon /></DropTool>
        <DropTool label="Periods"><ClockIcon /></DropTool>
        <DropTool label="Templates"><TemplateIcon /></DropTool>
        <Grip />
        {PERIODS.map((period, i) => (
            <Tool key={period} label={period} pressed={i === 0}>
                <span className="text-[10px] text-[#444]">{period}</span>
            </Tool>
        ))}
        <Separator />
    </div>
);

const StatusBar = () => (
    <div className="flex h-[22px] items-center bg-[#f0f0f0] text-[11px] leading-[16px] whitespace-nowrap">
        <span className="flex-1 pl-[2px]">Для справки, нажмите F1</span>
        <span className="w-29 border-l border-[#a0a0a0] pl-[5px]">Default</span>
        <span className="w-[102px] border-l border-[#a0a0a0] pl-[5px]">2010.01.05 13:18</span>
        <span className="w-[71px] border-l border-[#a0a0a0] pl-[5px]">O: 1.44240</span>
        <span className="w-[71px] border-l border-[#a0a0a0] pl-[5px]">H: 1.44253</span>
        <span className="w-[68px] border-l border-[#a0a0a0] pl-[5px]">L: 1.44232</span>
        <span className="w-[70px] border-l border-[#a0a0a0] pl-[5px]">C: 1.44251</span>
        <span className="w-[66px] border-l border-[#a0a0a0] pl-[5px]">V: 39</span>
        <span className="flex w-[162px] items-center border-l border-[#a0a0a0] pl-[5px]">
            <svg width="24" height="12" viewBox="0 0 24 12" aria-hidden="true">
                {[0, 1, 2, 3, 4, 5, 6, 7].map((i) => (
                    <g key={i}>
                        <rect x={i * 3} y="0" width="2" height={9 - i} fill="#6b8a12" />
                        <rect x={i * 3} y={10 - i} width="2" height={2 + i} fill="#14466e" />
                    </g>
                ))}
            </svg>
            <span className="flex-1 text-center">8726/8 kb</span>
            <svg width="16" height="16" viewBox="0 0 14 16" className="self-end" aria-hidden="true">
                <path d="M0 16L14 2M4 16L14 6M8 16l6-6" stroke="#999" />
            </svg>
        </span>
    </div>
);

const MetaTrader = () => (
    <section className="relative shrink-0 rounded-t-[7px] border border-black bg-linear-to-b from-[#97b3d2] to-[#bad1ec] to-[40px] px-[7px] pb-[5px] shadow-[inset_0_0_0_1px_#9fe0ee]">
        <header className="flex h-[27px] items-center gap-1 pt-[6px] pr-[2px] pl-[2px] text-[11px]">
            <Logo />
            <h1 className="flex-1">413755: MetaTrader - Alpari - [EURUSD,M1]</h1>
            <WindowButtons active />
        </header>
        <nav className="flex h-[21px] items-center gap-[17px] border-b border-[#a0a0a0] bg-[#f0f0f0] pl-1 text-[11px]">
            <span className="-mr-2 flex">
                <ChartsIcon />
            </span>
            {MENU.map((item) => (
                <button key={item} type="button">
                    {item}
                </button>
            ))}
            <div className="ml-auto flex gap-[2px] pr-[2px]">
                {["M2 9h5", "M5 2h6v5H5zM2 5h6v5H2z", "M3 2l7 7M10 2L3 9"].map((d, i) => (
                    <button key={d} type="button" aria-label={WINDOW_LABELS[i]} className="flex h-[17px] w-[17px] items-center justify-center border border-[#8fabc9] bg-[#e2effb]">
                        <svg width="12" height="12" viewBox="0 0 12 12" fill="none" aria-hidden="true">
                            <path d={d} stroke="#6c7f92" strokeWidth={i === 1 ? 1 : 2} />
                        </svg>
                    </button>
                ))}
            </div>
        </nav>
        <Toolbar />
        <ChartWindow />
        <div className="flex h-5 border-t border-black bg-[#f0f0f0] pl-1 text-[10px] leading-[17px]">
            {TABS.map((tab, i) => (
                <button
                    key={i}
                    type="button"
                    className={
                        i === 2
                            ? "h-[19px] w-20 shrink-0 border border-t-0 border-black bg-white text-black"
                            : i === 6 || i === 9
                              ? "h-[17px] w-[76px] shrink-0 text-[#777]"
                              : "h-[17px] w-20 shrink-0 text-[#777]"
                    }
                >
                    {i !== 2 && i !== 1 ? <span className="float-right mt-[3px] h-3 w-px bg-[#777]" /> : null}
                    {tab}
                </button>
            ))}
            <span className="ml-auto flex items-center gap-[14px] pr-1">
                <svg width="4" height="7" viewBox="0 0 4 7" aria-hidden="true"><path d="M4 0v7L0 3.500z" fill="#888" /></svg>
                <svg width="4" height="7" viewBox="0 0 4 7" aria-hidden="true"><path d="M0 0v7l4-3.500z" fill="#888" /></svg>
            </span>
        </div>
        <StatusBar />
        <DrawingTools />
        <p className="absolute top-[109px] left-[637px] h-[86px] w-[383px] bg-white font-['Liberation_Sans',Arial,sans-serif] text-[16px] leading-[20px] font-bold">
            Сново покупка 82, тп взят через 5мин.
        </p>
    </section>
);

/* ---------- signal counter ---------- */

const SignalColumn = ({ time, count, up }: { time: string; count: number; up: boolean }) => (
    <li className="flex w-10 shrink-0 flex-col">
        <span className={up ? "ml-[15px] w-[3px] bg-[#4aaccd]" : "ml-[12px] w-[3px] bg-[#c6514b]"} style={{ height: count + 2 }} />
        <span className="mt-px self-end text-[8px] leading-[10px] whitespace-nowrap text-white">{time}</span>
        <span className="self-end text-[8px] leading-[10px] text-white">5:1:10</span>
        <span className={up ? "text-center text-[12px] leading-[18px] font-bold text-[#4aa0bd]" : "text-center text-[12px] leading-[18px] font-bold text-[#c6514b]"}>{count}</span>
    </li>
);

const SignalWindow = () => (
    <section className="flex flex-1 flex-col bg-linear-to-b from-[#c3d2df] to-[#dae6f2] to-[20px] pr-[7px] pb-[7px] pl-[3px]">
        <header className="flex h-[22px] items-center gap-1 pr-[2px] pl-[2px] text-[11px] text-[#4d5b69]">
            <SignalLogo />
            <h2 className="flex-1 whitespace-pre">working...    current price is: 1.44497    analyse progress: 418</h2>
            <WindowButtons />
        </header>
        <div className="relative flex flex-1 flex-col justify-end overflow-hidden border border-[#6c7f8a] bg-[repeating-linear-gradient(#16262b_0_3px,#1a2224_3px_6px)] font-['DejaVu_Sans',Verdana,sans-serif]">
            <div className="absolute top-[9px] left-[65px] text-[10px] leading-[14px] text-[#cfe6ee]">Sygnals Counter: 1573</div>
            <button type="button" className="absolute top-[20px] left-[56px] h-[12px] w-[63px] border border-[#bbb] bg-[#f0f0f0] text-[10px] leading-[10px] whitespace-nowrap text-black">
                TSS Forum
            </button>
            <div className="absolute top-[9px] right-[73px] flex text-[10px] leading-[14px] text-[#4aa0bd]">
                <span className="w-[102px]">120:[ 194 ]</span>
                <span className="w-[104px]">60:[ 206 ]</span>
                <span className="w-[101px]">30:[ 89 ]</span>
                <span>15:[ 89 ]</span>
            </div>
            <ol className="-ml-[31px] flex items-end">
                <SignalColumn time="14:35:57" count={30} up />
                {SIGNALS.map(([time, count, direction], i) => (
                    <SignalColumn key={i} time={time} count={count} up={direction === "up"} />
                ))}
            </ol>
        </div>
    </section>
);

/* ---------- taskbar ---------- */

const TASKS = [
    { label: "41608: Grand...", icon: <GcIcon /> },
    { label: "working...    с...", icon: <SignalLogo /> },
    { label: "working...    с...", icon: <SignalLogo /> },
    { label: "413755: Meta...", icon: <Logo />, active: true },
    { label: "YouTube - F...", icon: <FirefoxIcon /> },
    { label: "Форум - Win...", icon: <ExplorerIcon /> },
    { label: "PR", icon: <FolderIcon /> },
];

const Taskbar = () => (
    <footer className="relative flex h-[30px] shrink-0 items-center bg-linear-to-b from-[#8e9194] via-[#3c3e40] via-45% to-[#0c0d0e] pl-[64px] text-[11px] text-white">
        <button type="button" aria-label="Start" className="absolute -top-[5px] left-[9px]">
            <svg width="42" height="35" viewBox="0 0 42 35" aria-hidden="true">
                <defs>
                    <radialGradient id="orb" cx=".5" cy=".9" r=".9">
                        <stop offset="0" stopColor="#58d6f4" />
                        <stop offset=".45" stopColor="#1f6ea8" />
                        <stop offset="1" stopColor="#9ab0bd" />
                    </radialGradient>
                </defs>
                <circle cx="21" cy="20" r="19.500" fill="url(#orb)" stroke="#1c2b36" />
                <path d="M13 11c3-2 5-2 8 0l-2 8c-3-2-5-2-8 0z" fill="#e8652a" />
                <path d="M22 12c3 2 6 2 10 0l-2 8c-4 2-7 2-10 0z" fill="#8cc63c" />
                <path d="M11 20c3-2 5-2 8 0l-2 8c-3-2-5-2-8 0z" fill="#4aa8ec" />
                <path d="M20 21c3 2 6 2 10 0l-2 8c-4 2-7 2-10 0z" fill="#fdd23c" />
            </svg>
        </button>
        <div className="flex w-[98px] shrink-0 gap-[7px] pl-[1px]">
            <Svg>
                <rect y="2" width="16" height="13" fill="#2c5aa6" stroke="#cde" />
                <path d="M3 4h6v4H3zM7 8h6v4H7z" fill="#6f9ade" stroke="#fff" />
            </Svg>
            <Svg>
                <rect y="2" width="16" height="11" fill="#5b9be0" stroke="#bcd" />
                <path d="M0 10L16 4v9H0z" fill="#2f66b0" />
                <path d="M3 15h10" stroke="#ddd" />
            </Svg>
            <FirefoxIcon />
            <Svg>
                {[0, 45, 90, 135, 180, 225, 270, 315].map((angle) => (
                    <circle key={angle} cx="8" cy="3" r="2.300" fill="#2fd43a" transform={`rotate(${angle} 8 8)`} />
                ))}
                <circle cx="8" cy="8" r="2" fill="#e8e03c" />
            </Svg>
        </div>
        <div className="flex flex-1 gap-1">
            {TASKS.map((task, i) => (
                <button
                    key={i}
                    type="button"
                    className={
                        task.active
                            ? "flex h-[27px] w-[120px] items-center gap-1 rounded-[3px] border border-[#111] bg-linear-to-b from-[#2e2e2e] to-[#050505] pl-2 whitespace-pre"
                            : "flex h-[27px] w-[120px] items-center gap-1 rounded-[3px] border border-[#6f7174] bg-linear-to-b from-[#707274] via-[#353637] via-50% to-[#121314] pl-2 whitespace-pre shadow-[0_0_0_1px_#222]"
                    }
                >
                    {task.icon}
                    {task.label}
                </button>
            ))}
        </div>
        <div className="flex shrink-0 items-center pr-[13px]">
            <span className="w-[26px]">RU</span>
            <svg width="20" height="16" viewBox="0 0 20 16" fill="none" aria-hidden="true">
                <path d="M13 5l-3 3 3 3" stroke="#fff" strokeWidth="2" />
            </svg>
            <div className="flex items-center gap-[2px] pl-[2px]">
                <Svg>
                    <rect width="14" height="13" rx="6" fill="#7ec81e" />
                    <rect x="3" y="5" width="13" height="11" rx="5" fill="#7ec81e" />
                    <path d="M4 7l3 3 5-6" stroke="#fff" strokeWidth="2" />
                </Svg>
                <Svg>
                    <circle cx="8" cy="8" r="7.500" fill="#3c9a1a" />
                    <path d="M3 6h10M3 9h10M5 12h6" stroke="#123f08" strokeWidth="2" strokeDasharray="2 1" />
                    <path d="M8 0v3" stroke="#6b3d12" strokeWidth="1.500" />
                </Svg>
                <Svg>
                    <rect x="2" y="1" width="13" height="10" fill="#777" stroke="#222" />
                    <path d="M1 14h5M9 14h5" stroke="#ddd" strokeWidth="2" />
                </Svg>
                <Svg>
                    <circle cx="8" cy="8" r="7.500" fill="#3ba4d8" />
                    <path d="M5 2l3 6 3-6M8 8l-4 5M8 8l4 5" stroke="#fff" strokeWidth="1.800" />
                </Svg>
                <Svg>
                    <path d="M0 2h14v3H0zM0 6h14v3H0zM0 10h14v3H0z" fill="#a8a49a" />
                    <path d="M4 2v11M9 2v11" stroke="#555" />
                    <circle cx="12" cy="10" r="4.500" fill="#e89a1c" />
                    <path d="M12 7v4M12 12v1" stroke="#222" strokeWidth="1.500" />
                </Svg>
            </div>
            <div className="flex items-center gap-[2px] pr-[7px] pl-[14px]">
                <Svg>
                    <path d="M2 1v4M5 1v4M0 5h7v3L5 10v5H3v-5L0 8z" fill="#fff" stroke="#fff" />
                    <rect x="8" y="2" width="6" height="13" rx="1" fill="#8fd08a" stroke="#fff" />
                </Svg>
                <Svg>
                    <rect x="5" y="1" width="10" height="8" fill="#2a6fd0" stroke="#dde" />
                    <rect x="1" y="6" width="9" height="7" fill="#4a92e4" stroke="#dde" />
                    <circle cx="11" cy="11" r="4" fill="#2ba84a" />
                </Svg>
                <Svg>
                    <path d="M1 5h3l4-4v14l-4-4H1z" fill="#f4f4f4" />
                    <path d="M10 5c1.500 2 1.500 4 0 6" stroke="#ccc" />
                </Svg>
            </div>
            <time>15:46</time>
        </div>
    </footer>
);

const App = () => (
    <main className="relative flex min-h-screen flex-col overflow-hidden bg-[#20242c] font-['Open_Sans','Noto_Sans',sans-serif] text-black">
        <MetaTrader />
        <SignalWindow />
        <Taskbar />
        <svg className="pointer-events-none absolute inset-0 h-full w-full" aria-hidden="true">
            <path d="M194 637L867 342M752 643L1068 251" stroke="#5068dc" strokeWidth="2" strokeLinecap="round" />
        </svg>
    </main>
);

export default App;
